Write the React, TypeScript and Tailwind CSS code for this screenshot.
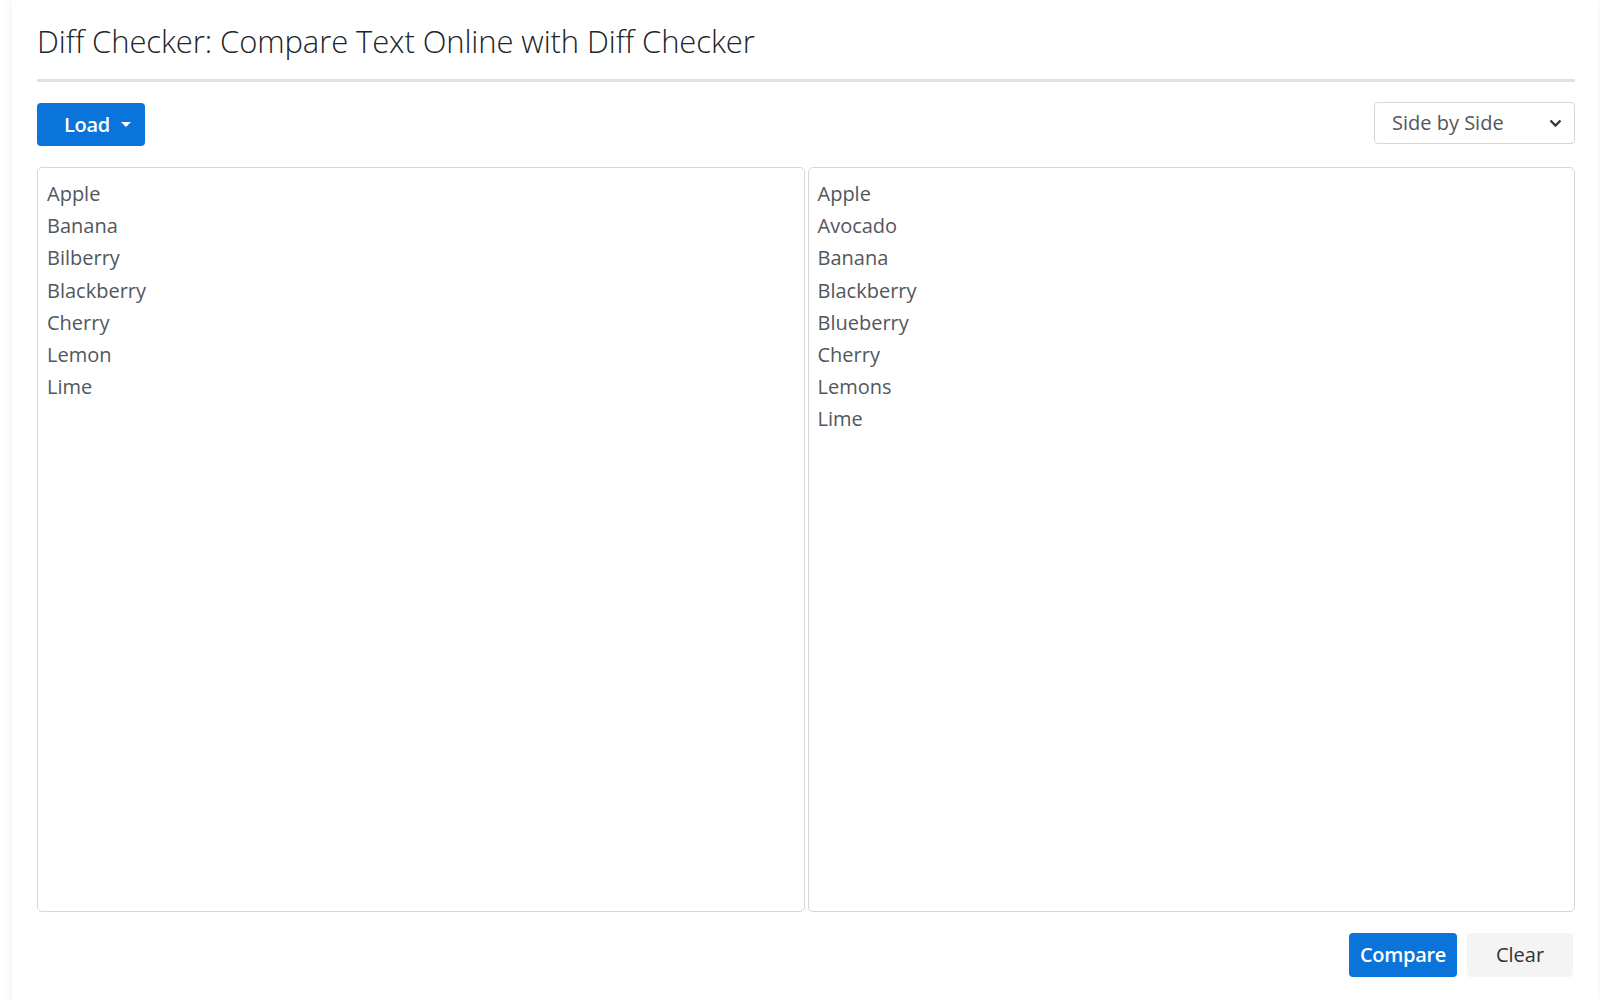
import React from "react";

const leftLines = ["Apple", "Banana", "Bilberry", "Blackberry", "Cherry", "Lemon", "Lime"];
const rightLines = ["Apple", "Avocado", "Banana", "Blackberry", "Blueberry", "Cherry", "Lemons", "Lime"];

function TextPane({ lines }: { lines: string[] }) {
  return (
    <div className="h-[745px] rounded-[5px] border border-[#d6d6d6] bg-white pl-[9px] pr-3 pt-[10px] text-[20px] leading-[32.2px] text-[#52575c]">
      {lines.map((l, i) => (
        <div key={i}>{l}</div>
      ))}
    </div>
  );
}

export default function App() {
  return (
    <div className="min-h-[1001px] bg-white pl-[12px] pr-[2px] font-['Open_Sans','Noto_Sans',sans-serif]">
      <div className="min-h-[1001px] bg-white pl-[25px] pr-[23px] shadow-[0_0_10px_rgba(0,0,0,0.07)]">
        <h1 className="pt-[19px] pb-[16px] text-[31px] font-light leading-[44px] tracking-[-0.1px] text-[#212529]">
          Diff Checker: Compare Text Online with Diff Checker
        </h1>
        <div className="h-[3px] bg-[#dde3ea]" />

        <div className="mt-[21px] flex items-start justify-between">
          <button className="flex h-[43px] w-[108px] items-center gap-[11px] rounded-[4px] bg-[#0a74da] pl-[27px] text-[20px] font-semibold tracking-[-0.3px] text-white">
            <span>Load</span>
            <svg width="10" height="6" viewBox="0 0 10 6" className="mt-[1px]">
              <path d="M0 0 L10 0 L5 5 Z" fill="white" />
            </svg>
          </button>
          <div className="mt-[-1px] flex h-[42px] w-[201px] items-center justify-between rounded-[4px] border border-[#d3d7db] bg-white pl-[17px] pr-[12px] text-[20px] text-[#52575c]">
            <span>Side by Side</span>
            <svg width="13" height="9" viewBox="0 0 13 9">
              <path d="M1.5 1.5 L6.5 6.5 L11.5 1.5" fill="none" stroke="#343a40" strokeWidth="2.4" />
            </svg>
          </div>
        </div>

        <div className="mt-[21px] grid grid-cols-2 gap-[3px]">
          <TextPane lines={leftLines} />
          <TextPane lines={rightLines} />
        </div>

        <div className="mt-[21px] flex justify-end gap-[10px] pr-[2px]">
          <button className="h-[44px] w-[108px] rounded-[4px] bg-[#0a74da] text-[20px] font-semibold tracking-[-0.3px] text-white">
            Compare
          </button>
          <button className="h-[44px] w-[106px] rounded-[4px] bg-[#f4f4f4] text-[20px] text-[#333]">
            Clear
          </button>
        </div>
      </div>
    </div>
  );
}
